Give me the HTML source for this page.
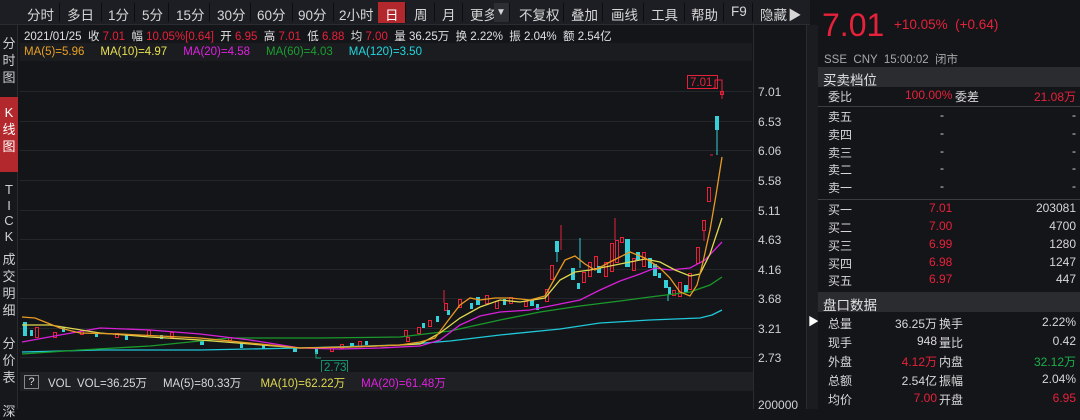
<!DOCTYPE html>
<html><head><meta charset="utf-8"><style>
*{margin:0;padding:0;box-sizing:border-box}
body{width:1080px;height:409px;background:#131519;font-family:"Liberation Sans","Noto Sans CJK SC",sans-serif;color:#d8d8d8;position:relative;overflow:hidden;font-size:12px}
.abs{position:absolute}
.tb{left:0;top:0;width:810px;height:25px;background:#1c1e23;border-bottom:1px solid #2a2c31}
.tb span{position:absolute;top:4px;font-size:13.5px;color:#d6d6d6}
.sep{position:absolute;top:3px;width:1px;height:19px;background:#0c0d10}
.side{left:0;top:25px;width:18px;height:384px;background:#16181c;border-right:1px solid #2a2c31}
.side div{position:absolute;left:0;width:18px;text-align:center;font-size:13px;line-height:17px;color:#cfcfcf}
.r{color:#e8213a}.g{color:#1bb04a}
.rp{left:818px;top:0;width:262px;height:409px;background:#131519}
.row{position:absolute;left:8px;width:250px;height:17px;font-size:12px}
.row span{position:absolute;top:0}
</style></head><body>
<div class="abs tb">
<span style="left:27px">分时</span><div class="sep" style="left:59px"></div>
<span style="left:67px">多日</span><div class="sep" style="left:101px"></div>
<span style="left:108px">1分</span><div class="sep" style="left:134px"></div>
<span style="left:142px">5分</span><div class="sep" style="left:168px"></div>
<span style="left:176px">15分</span><div class="sep" style="left:209px"></div>
<span style="left:217px">30分</span><div class="sep" style="left:250px"></div>
<span style="left:257px">60分</span><div class="sep" style="left:292px"></div>
<span style="left:298px">90分</span><div class="sep" style="left:333px"></div>
<span style="left:339px">2小时</span>
<div class="abs" style="left:378px;top:2px;width:27px;height:21px;background:#b3282c"></div>
<span style="left:385px;color:#fff">日</span><div class="sep" style="left:405px"></div>
<span style="left:414px">周</span><div class="sep" style="left:434px"></div>
<span style="left:442px">月</span><div class="sep" style="left:462px"></div>
<span style="left:470px">更多</span><div class="abs" style="left:494px;top:3px;width:15px;height:19px;background:#2c2e34"></div><span style="left:496px;font-size:10px;top:7px">▼</span><div class="sep" style="left:509px"></div>
<span style="left:519px">不复权</span><div class="sep" style="left:563px"></div>
<span style="left:571px">叠加</span><div class="sep" style="left:602px"></div>
<span style="left:611px">画线</span><div class="sep" style="left:643px"></div>
<span style="left:651px">工具</span><div class="sep" style="left:684px"></div>
<span style="left:691px">帮助</span><div class="sep" style="left:723px"></div>
<span style="left:731px">F9</span><div class="sep" style="left:752px"></div>
<span style="left:760px">隐藏</span><span style="left:788px">▶</span>
</div>
<div class="abs" style="left:24px;top:28px;font-size:11.5px;color:#e0e0e0;white-space:pre">2021/01/25  收 <span class="r">7.01</span>  幅 <span class="r">10.05%[0.64]</span>  开 <span class="r">6.95</span>  高 <span class="r">7.01</span>  低 <span class="r">6.88</span>  均 <span class="r">7.00</span>  量 36.25万  换 2.22%  振 2.04%  额 2.54亿</div>
<div class="abs" style="left:20px;top:43px;width:732px;height:18px;background:#1a1c20"></div>
<div class="abs" style="left:24px;top:46px;font-size:11.5px;white-space:pre"><span style="color:#e8a022">MA(5)=5.96</span>     <span style="color:#e8e050">MA(10)=4.97</span>     <span style="color:#e020e0">MA(20)=4.58</span>     <span style="color:#1aa030">MA(60)=4.03</span>     <span style="color:#20d8e0">MA(120)=3.50</span></div>
<div class="abs side">
<div style="top:10px">分<br>时<br>图</div>
<div style="top:72px;height:75px;background:#b3282c"></div>
<div style="top:79px;color:#fff">K<br>线<br>图</div>
<div style="top:157px;line-height:15.5px">T<br>I<br>C<br>K</div>
<div style="top:226px">成<br>交<br>明<br>细</div>
<div style="top:310px">分<br>价<br>表</div>
<div style="top:378px">深</div>
</div>
<svg class="abs" style="left:0;top:0" width="818" height="409">
<g stroke="#23262b" stroke-width="1">
<line x1="20" y1="91.5" x2="752" y2="91.5"/><line x1="20" y1="121.5" x2="752" y2="121.5"/><line x1="20" y1="150.5" x2="752" y2="150.5"/><line x1="20" y1="180.5" x2="752" y2="180.5"/><line x1="20" y1="210.5" x2="752" y2="210.5"/><line x1="20" y1="239.5" x2="752" y2="239.5"/><line x1="20" y1="269.5" x2="752" y2="269.5"/><line x1="20" y1="298.5" x2="752" y2="298.5"/><line x1="20" y1="328.5" x2="752" y2="328.5"/><line x1="20" y1="357.5" x2="752" y2="357.5"/>
</g>
<line x1="753.5" y1="25" x2="753.5" y2="409" stroke="#2a2c31"/>
<line x1="806.5" y1="25" x2="806.5" y2="409" stroke="#2a2c31"/>
<g fill="#d0d0d0" font-size="12" font-family="Liberation Sans">
<text x="758" y="96">7.01</text><text x="758" y="126">6.53</text><text x="758" y="155">6.06</text><text x="758" y="185">5.58</text><text x="758" y="215">5.11</text><text x="758" y="244">4.63</text><text x="758" y="274">4.16</text><text x="758" y="303">3.68</text><text x="758" y="333">3.21</text><text x="758" y="362">2.73</text>
<text x="758" y="409">200000</text>
</g>
<g stroke="#e8213a" fill="#131519" stroke-width="1">
<rect x="35.5" y="327.5" width="3" height="10"/><rect x="53.5" y="332.5" width="3" height="5"/><rect x="80.5" y="330.5" width="3" height="4"/><rect x="115.5" y="333.5" width="3" height="4"/><rect x="147.5" y="330.5" width="3" height="5"/><rect x="170.5" y="332.5" width="3" height="5"/><rect x="228.5" y="337.5" width="3" height="3"/><rect x="330.5" y="347.5" width="3" height="4"/><rect x="340.5" y="344.5" width="3" height="4"/><rect x="358.5" y="341.5" width="3" height="5"/><rect x="404.5" y="330.5" width="3" height="6"/>
<rect x="406.5" y="337.5" width="3" height="4"/><rect x="417.5" y="327.5" width="3" height="6"/><rect x="428.5" y="320.5" width="3" height="6"/><rect x="444.5" y="303.5" width="3" height="7"/><rect x="458.5" y="299.5" width="3" height="8"/><rect x="485.5" y="295.5" width="3" height="8"/><rect x="495.5" y="301.5" width="3" height="7"/><rect x="509.5" y="297.5" width="3" height="6"/><rect x="524.5" y="301.5" width="3" height="5"/><rect x="545.5" y="289.5" width="3" height="12"/><rect x="550.5" y="265.5" width="3" height="14"/><rect x="582.5" y="272.5" width="3" height="10"/><rect x="588.5" y="262.5" width="3" height="14"/><rect x="594.5" y="256.5" width="3" height="12"/><rect x="604.5" y="262.5" width="3" height="14"/><rect x="610.5" y="243.5" width="3" height="28"/><rect x="615.5" y="240.5" width="3" height="22"/><rect x="620.5" y="237.5" width="3" height="5"/><rect x="632.5" y="258.5" width="3" height="12"/><rect x="642.5" y="252.5" width="3" height="14"/><rect x="672.5" y="290.5" width="3" height="5"/><rect x="678.5" y="282.5" width="3" height="14"/><rect x="688.5" y="273.5" width="3" height="16"/><rect x="696.5" y="247.5" width="3" height="16"/><rect x="702.5" y="220.5" width="3" height="10"/><rect x="707.5" y="187.5" width="3" height="14"/><rect x="720.5" y="91.5" width="3" height="3"/>
</g>
<g stroke="#e8213a" stroke-width="1">
<line x1="561" y1="225" x2="561" y2="250"/><line x1="615" y1="218" x2="615" y2="240"/><line x1="704" y1="230" x2="704" y2="241"/><line x1="722" y1="87" x2="722" y2="99"/><line x1="710" y1="155" x2="713" y2="155"/><line x1="444" y1="290" x2="444" y2="303"/>
<polyline fill="none" points="713,88 715,88 715,80 722,80 722,87"/>
</g>
<rect x="687.5" y="75.5" width="30" height="13" fill="none" stroke="#e8213a"/>
<text x="690" y="86" fill="#e8213a" font-size="11.5" font-family="Liberation Sans">7.01</text>
<g fill="#35d0d8">
<rect x="23" y="322" width="4" height="14"/><rect x="30" y="330" width="3" height="6"/><rect x="62" y="327" width="3" height="5"/><rect x="95" y="333" width="3" height="4"/><rect x="125" y="335" width="3" height="5"/><rect x="160" y="335" width="3" height="4"/><rect x="200" y="340" width="4" height="5"/><rect x="240" y="342" width="3" height="6"/><rect x="262" y="345" width="3" height="4"/><rect x="293" y="347" width="4" height="5"/><rect x="315" y="349" width="3" height="5"/><rect x="350" y="343" width="4" height="4"/><rect x="365" y="341" width="3" height="4"/><rect x="422" y="323" width="3" height="5"/><rect x="436" y="316" width="3" height="6"/><rect x="447" y="310" width="3" height="5"/><rect x="470" y="303" width="3" height="6"/><rect x="476" y="297" width="4" height="8"/><rect x="503" y="299" width="3" height="6"/><rect x="530" y="300" width="4" height="6"/><rect x="536" y="304" width="3" height="6"/><rect x="555" y="241" width="4" height="11"/><rect x="571" y="268" width="4" height="12"/><rect x="577" y="283" width="3" height="6"/><rect x="597" y="266" width="4" height="7"/><rect x="625" y="239" width="5" height="28"/><rect x="636" y="252" width="4" height="8"/><rect x="648" y="258" width="4" height="10"/><rect x="653" y="264" width="4" height="12"/><rect x="658" y="273" width="3" height="5"/><rect x="664" y="280" width="4" height="8"/><rect x="668" y="287" width="3" height="7"/><rect x="684" y="285" width="4" height="7"/><rect x="715" y="116" width="4" height="14"/>
</g>
<g stroke="#35d0d8" stroke-width="1">
<line x1="580" y1="238" x2="580" y2="268"/><line x1="717" y1="130" x2="717" y2="155"/><line x1="668" y1="294" x2="668" y2="301"/><line x1="557" y1="252" x2="557" y2="262"/>
</g>
<g fill="none" stroke-width="1.3">
<polyline stroke="#20c8d8" points="22,352 100,350 200,350 300,348 400,345 450,341 500,335 560,329 600,323 650,320 700,318 712,315 722,310"/>
<polyline stroke="#1a9a2a" points="22,354 80,350 150,346 230,338 320,338 400,337 450,331 500,320 540,312 580,306 620,301 650,297 690,292 710,285 722,277"/>
<polyline stroke="#d820d8" points="22,342 60,335 100,328 150,330 200,334 250,340 300,348 340,349 380,348 420,346 440,340 460,325 480,316 500,312 530,310 560,304 580,300 600,290 620,281 640,274 655,268 670,270 690,268 705,260 722,242"/>
<polyline stroke="#e0d850" points="22,325 50,325 100,333 150,337 200,340 250,344 300,348 350,347 400,345 420,344 440,333 460,318 480,307 500,300 520,302 545,298 560,280 575,272 590,270 610,266 630,262 645,259 660,262 675,270 690,276 700,274 710,254 722,218"/>
<polyline stroke="#e89a22" points="22,317 35,318 45,322 60,328 80,333 120,334 160,336 200,338 250,343 300,348 350,347 400,345 420,342 435,338 450,318 460,305 470,298 480,300 495,298 510,298 530,300 545,296 555,278 565,260 575,256 585,264 595,270 610,262 630,252 645,258 660,268 670,278 680,292 690,296 697,285 703,262 710,230 716,195 722,157"/>
</g>
<polyline fill="none" stroke="#1aa07a" points="316,352 316,358 321,358"/>
<rect x="321.5" y="360.5" width="26" height="13" fill="none" stroke="#1a8a6a"/>
<text x="324" y="371" fill="#1aa07a" font-size="11.5" font-family="Liberation Sans">2.73</text>
</svg>
<div class="abs" style="left:20px;top:372px;width:733px;height:19px;background:#1e2024"></div>
<div class="abs" style="left:24px;top:375px;width:15px;height:14px;border:1px solid #888;font-size:11px;text-align:center;line-height:12px">?</div>
<div class="abs" style="left:48px;top:375px;font-size:11.5px;white-space:pre">VOL  VOL=36.25万     MA(5)=80.33万      <span style="color:#e0d850">MA(10)=62.22万</span>     <span style="color:#e020e0">MA(20)=61.48万</span></div>
<div class="abs" style="left:807px;top:25px;width:11px;height:384px;background:#1a1c20"></div>
<div class="abs" style="left:808px;top:313px;font-size:11px;color:#fff">▶</div>
<div class="abs rp">
<div class="abs" style="left:4px;top:7px;font-size:32px;color:#e8213a">7.01</div>
<div class="abs" style="left:76px;top:17px;font-size:13.5px;color:#e8213a;white-space:pre">+10.05%  (+0.64)</div>
<div class="abs" style="left:6px;top:51px;font-size:11.5px;color:#a8a8a8;white-space:pre">SSE  CNY  15:00:02  闭市</div>
<div class="abs" style="left:0;top:67px;width:262px;height:20px;background:#2a2c30"></div>
<div class="abs" style="left:5px;top:69px;font-size:13.5px;color:#e0e0e0">买卖档位</div>
<div class="row" style="top:88px"><span style="left:2px">委比</span><span class="r" style="left:79px">100.00%</span><span style="left:129px">委差</span><span class="r" style="right:0">21.08万</span></div>
<div class="abs" style="left:0;top:106px;width:262px;height:1px;background:#3a3c40"></div>
<div class="row" style="top:108px"><span style="left:2px">卖五</span><span style="left:114px">-</span><span style="right:0">-</span></div>
<div class="row" style="top:126px"><span style="left:2px">卖四</span><span style="left:114px">-</span><span style="right:0">-</span></div>
<div class="row" style="top:144px"><span style="left:2px">卖三</span><span style="left:114px">-</span><span style="right:0">-</span></div>
<div class="row" style="top:161px"><span style="left:2px">卖二</span><span style="left:114px">-</span><span style="right:0">-</span></div>
<div class="row" style="top:179px"><span style="left:2px">卖一</span><span style="left:114px">-</span><span style="right:0">-</span></div>
<div class="abs" style="left:0;top:199px;width:262px;height:1px;background:#3a3c40"></div>
<div class="row" style="top:201px"><span style="left:2px">买一</span><span class="r" style="left:103px">7.01</span><span style="right:0">203081</span></div>
<div class="row" style="top:219px"><span style="left:2px">买二</span><span class="r" style="left:103px">7.00</span><span style="right:0">4700</span></div>
<div class="row" style="top:237px"><span style="left:2px">买三</span><span class="r" style="left:103px">6.99</span><span style="right:0">1280</span></div>
<div class="row" style="top:255px"><span style="left:2px">买四</span><span class="r" style="left:103px">6.98</span><span style="right:0">1247</span></div>
<div class="row" style="top:272px"><span style="left:2px">买五</span><span class="r" style="left:103px">6.97</span><span style="right:0">447</span></div>
<div class="abs" style="left:0;top:292px;width:262px;height:20px;background:#2a2c30"></div>
<div class="abs" style="left:5px;top:294px;font-size:13.5px;color:#e0e0e0">盘口数据</div>
<div class="row" style="top:315px"><span style="left:2px">总量</span><span style="right:139px">36.25万</span><span style="left:113px">换手</span><span style="right:0">2.22%</span></div>
<div class="row" style="top:334px"><span style="left:2px">现手</span><span style="right:139px">948</span><span style="left:113px">量比</span><span style="right:0">0.42</span></div>
<div class="row" style="top:353px"><span style="left:2px">外盘</span><span class="r" style="right:139px">4.12万</span><span style="left:113px">内盘</span><span class="g" style="right:0">32.12万</span></div>
<div class="row" style="top:372px"><span style="left:2px">总额</span><span style="right:139px">2.54亿</span><span style="left:113px">振幅</span><span style="right:0">2.04%</span></div>
<div class="row" style="top:391px"><span style="left:2px">均价</span><span class="r" style="right:139px">7.00</span><span style="left:113px">开盘</span><span class="r" style="right:0">6.95</span></div>
</div>
</body></html>
